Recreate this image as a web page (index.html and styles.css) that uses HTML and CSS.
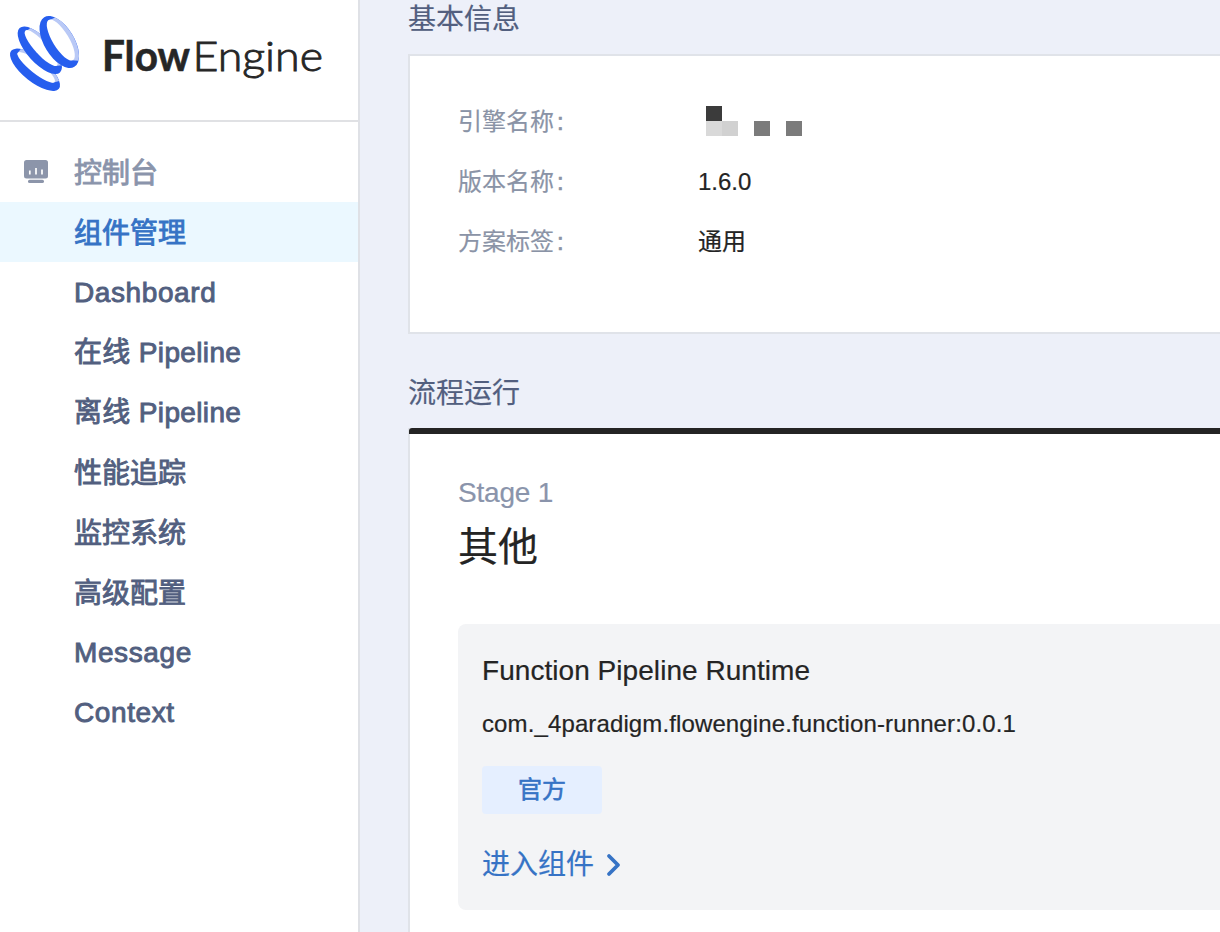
FILE: index.html
```html
<!DOCTYPE html>
<html lang="zh-CN">
<head>
<meta charset="utf-8">
<title>FlowEngine</title>
<link rel="stylesheet" href="styles.css">
</head>
<body>
<div class="app">
  <aside class="sidebar">
    <header class="brand">
      <svg width="358" height="120" viewBox="0 0 358 120" role="img" aria-label="FlowEngine">
        <g transform="translate(35 69.8) rotate(38.5)"><ellipse class="ring-dark" rx="30.5" ry="12"/><path class="ring-light" d="M-24 -7.4A30.5 12 0 0 1 26 -6.3L22 -1L-24 -1Z"/><ellipse class="hole" cx="-0.5" cy="-2.6" rx="23.5" ry="5.9"/></g>
        <g transform="translate(39.8 50.3) rotate(47.7)"><ellipse class="ring-dark" rx="30" ry="12.4"/><path class="ring-light" d="M-23 -8A30 12.4 0 0 1 26 -6.2L22 -1L-23 -1Z"/><ellipse class="hole" cx="-0.8" cy="-2.5" rx="23.5" ry="6.4"/></g>
        <g transform="translate(59.3 42) rotate(58.7)"><ellipse class="ring-dark" rx="29" ry="15"/><path class="ring-light" d="M-23 -9.1A29 15 0 0 1 26 -6.6L22 -1L-24 -1Z"/><ellipse class="hole" cx="-0.9" cy="-2.3" rx="23.5" ry="8.1"/></g>
        <text class="word-bold" x="102" y="71" textLength="88" lengthAdjust="spacingAndGlyphs">Flow</text>
        <text class="word-light" x="192.5" y="71" textLength="130.5" lengthAdjust="spacingAndGlyphs">Engine</text>
      </svg>
    </header>
    <nav class="menu">
      <div class="item group">
        <svg class="console" width="24" height="24" viewBox="0 0 24 24"><rect width="24" height="18.5" rx="2.5"/><rect x="4" y="19.7" width="16" height="3.3" rx="1.6"/><path d="M5.8 10.5v4M12 8v6.500M18 9.500v5"/></svg>
        <span>控制台</span>
      </div>
      <a class="item active">组件管理</a>
      <a class="item latin">Dashboard</a>
      <a class="item mixed">在线 Pipeline</a>
      <a class="item mixed">离线 Pipeline</a>
      <a class="item">性能追踪</a>
      <a class="item">监控系统</a>
      <a class="item">高级配置</a>
      <a class="item latin">Message</a>
      <a class="item latin">Context</a>
    </nav>
  </aside>
  <main class="content">
    <h2 class="title">基本信息</h2>
    <section class="panel info">
      <div class="row"><span class="label">引擎名称<i class="colon">:</i></span>
        <svg class="mosaic" width="104" height="36" viewBox="0 0 104 36"><path fill="#3b3b3b" d="M8 2h16v15H8z"/><path fill="#d9d9d9" d="M8 17h16v15H8z"/><path fill="#d1d1d1" d="M24 17h16v15H24z"/><path fill="#7b7b7b" d="M56 17h16v15H56zM88 17h16v15H88z"/></svg>
      </div>
      <div class="row"><span class="label">版本名称<i class="colon">:</i></span><span class="value">1.6.0</span></div>
      <div class="row"><span class="label">方案标签<i class="colon">:</i></span><span class="value">通用</span></div>
    </section>
    <h2 class="title">流程运行</h2>
    <section class="panel flow">
      <div class="stage">Stage 1</div>
      <h3 class="stage-name">其他</h3>
      <article class="card">
        <div class="card-name">Function Pipeline Runtime</div>
        <div class="card-id">com._4paradigm.flowengine.function-runner:0.0.1</div>
        <div class="tag">官方</div>
        <a class="enter"><span>进入组件</span><svg class="arrow" width="16" height="24" viewBox="0 0 16 24"><path d="M3 3l9 9-9 9"/></svg></a>
      </article>
    </section>
  </main>
</div>
</body>
</html>
```

FILE: styles.css
```css
* { box-sizing: border-box; }
body {
  margin: 0;
  overflow: hidden;
  font-family: "Liberation Sans", "Noto Sans CJK SC", sans-serif;
  color: #242424;
}
.app { display: flex; height: 932px; background: #edf0f9; }
.sidebar { flex: 0 0 360px; background: #fff; border-right: 2px solid #dfe1e6; }
.brand { height: 122px; border-bottom: 2px solid #e0e1e4; }
.brand svg { display: block; }
.ring-light { fill: #b9c9f6; }
.ring-dark { fill: #265eee; }
.hole { fill: #fff; }
.word-bold, .word-light { font-family: Lato, sans-serif; font-size: 41.5px; fill: #262626; }
.word-bold { font-weight: 700; stroke: #262626; stroke-width: .6px; }
.word-light { font-weight: 300; stroke: #262626; stroke-width: .9px; }
.menu { padding-top: 20px; }
.item {
  display: flex;
  align-items: center;
  height: 60px;
  padding: 3px 0 0 74px;
  font-size: 28px;
  line-height: 40px;
  white-space: pre;
  color: #525f7f;
  -webkit-text-stroke: .9px currentColor;
}
.latin { padding-top: 2px; letter-spacing: .6px; }
.mixed { padding-top: 2px; letter-spacing: .35px; }
.group { padding-left: 24px; gap: 26px; color: #8a94ab; }
.active { background: #ebf8ff; color: #3673c5; }
.console { fill: #8c95aa; margin-top: -3px; }
.console path { stroke: #fff; stroke-width: 1.7; }
.content { flex: 1; min-width: 0; padding-left: 48px; }
.title {
  height: 40px;
  margin: 0;
  padding-top: 2px;
  font-size: 28px;
  font-weight: 400;
  line-height: 40px;
  color: #525f7f;
  -webkit-text-stroke: .2px currentColor;
}
.content > .title:first-child { margin-top: -2px; }
.panel { background: #fff; border-left: 2px solid #e0e3e9; }
.info {
  height: 280px;
  margin: 16px 0 38px;
  padding: 36px 48px;
  border-top: 2px solid #e0e3e9;
  border-bottom: 2px solid #e0e3e9;
}
.row {
  display: flex;
  align-items: center;
  height: 60px;
  font-size: 24px;
  line-height: 34px;
  -webkit-text-stroke: .2px currentColor;
}
.label { flex: 0 0 240px; color: #8a93a6; }
.mosaic { flex: none; }
.colon { font-style: normal; margin-left: 3px; -webkit-text-stroke: .7px currentColor; }
.flow {
  position: relative;
  height: 520px;
  margin-top: 16px;
  padding: 48px 0 0 48px;
  -webkit-text-stroke: .2px currentColor;
}
.flow::before {
  content: "";
  position: absolute;
  top: 0;
  left: -1px;
  right: 0;
  height: 6px;
  border-radius: 3px 0 0 0;
  background: #242424;
}
.stage { font-size: 28px; line-height: 34px; letter-spacing: -.2px; color: #8a94ab; }
.stage-name { margin: 8px 0 0; font-size: 40px; font-weight: 400; line-height: 58px; }
.card {
  height: 286px;
  margin-top: 48px;
  padding: 25px 24px;
  border-radius: 8px 0 0 8px;
  background: #f3f4f6;
}
.card-name { font-size: 28px; line-height: 44px; letter-spacing: .05px; }
.card-id { margin-top: 13px; font-size: 24px; line-height: 36px; letter-spacing: .12px; }
.tag {
  width: 120px;
  height: 48px;
  margin-top: 24px;
  border-radius: 4px;
  background: #e5efff;
  color: #3673c5;
  font-size: 24px;
  line-height: 48px;
  text-align: center;
  -webkit-text-stroke: .6px currentColor;
}
.enter {
  display: flex;
  align-items: center;
  gap: 12px;
  height: 40px;
  margin-top: 31px;
  font-size: 28px;
  line-height: 40px;
  color: #3673c5;
}
.arrow { fill: none; stroke: #3673c5; stroke-width: 3.8; stroke-linecap: round; stroke-linejoin: round; }
```
